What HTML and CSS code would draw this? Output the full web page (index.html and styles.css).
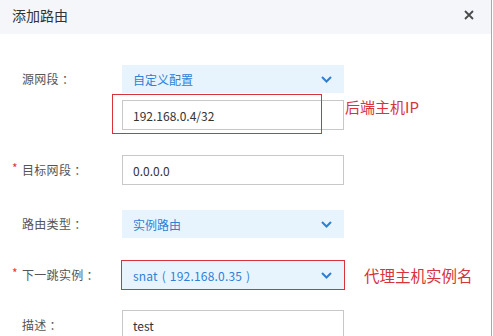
FILE: index.html
```html
<!DOCTYPE html>
<html lang="zh-CN">
<head>
<meta charset="utf-8">
<title>添加路由</title>
<link rel="stylesheet" href="styles.css">
</head>
<body>
<div class="dialog">
  <div class="dialog-header">
    <span class="dialog-title">添加路由</span>
    <svg class="close" width="10" height="10" viewBox="0 0 10 10"><path d="M1 1L9 9M9 1L1 9" stroke="#4a4a4a" stroke-width="1.8" fill="none"/></svg>
  </div>
  <div class="dialog-body">
    <div class="row row-src">
      <div class="label">源网段<span class="colon">：</span></div>
      <div class="controls">
        <div class="select">
          <span>自定义配置</span>
          <svg class="chev" width="11" height="7" viewBox="0 0 11 7"><path d="M1 1L5.5 5.5L10 1" stroke="#2f7fd0" stroke-width="2" fill="none"/></svg>
        </div>
        <div class="annotated">
          <div class="input input-gap">192.168.0.4/32</div>
          <span class="redbox redbox-ip"></span>
          <span class="note note-ip">后端主机IP</span>
        </div>
      </div>
    </div>
    <div class="row row-dst">
      <div class="label"><span class="req">*</span>目标网段<span class="colon">：</span></div>
      <div class="controls"><div class="input">0.0.0.0</div></div>
    </div>
    <div class="row row-type">
      <div class="label">路由类型<span class="colon">：</span></div>
      <div class="controls">
        <div class="select">
          <span>实例路由</span>
          <svg class="chev" width="11" height="7" viewBox="0 0 11 7"><path d="M1 1L5.5 5.5L10 1" stroke="#2f7fd0" stroke-width="2" fill="none"/></svg>
        </div>
      </div>
    </div>
    <div class="row row-next">
      <div class="label"><span class="req">*</span>下一跳实例<span class="colon">：</span></div>
      <div class="controls annotated">
        <div class="select select-flagged">
          <span class="wide">snat ( 192.168.0.35 )</span>
          <svg class="chev" width="11" height="7" viewBox="0 0 11 7"><path d="M1 1L5.5 5.5L10 1" stroke="#2f7fd0" stroke-width="2" fill="none"/></svg>
        </div>
        <span class="note note-inst">代理主机实例名</span>
      </div>
    </div>
    <div class="row row-desc">
      <div class="label">描述<span class="colon">：</span></div>
      <div class="controls"><div class="input">test</div></div>
    </div>
  </div>
</div>
</body>
</html>
```

FILE: styles.css
```css
* { box-sizing: border-box; }
html, body { margin: 0; padding: 0; background: #fff; }
body {
  font-family: "Noto Sans CJK SC", "Noto Sans", sans-serif;
  font-size: 12px;
  color: #333;
  overflow: hidden;
  height: 336px;
}
.dialog {
  width: 492px;
  height: 336px;
  border-right: 1px solid #a8a8a8;
  background: #fff;
}
.dialog-header {
  height: 34px;
  background: #f4f6f9;
  display: flex;
  align-items: center;
  justify-content: space-between;
  padding: 0 17px 0 12px;
}
.dialog-title {
  font-size: 14px;
  color: #333;
  line-height: 1;
  margin-top: -4px;
}
.close { margin-top: -5px; }
.dialog-body { padding-top: 31px; }
.row {
  display: flex;
  align-items: flex-start;
}
.label {
  width: 122px;
  padding-left: 22px;
  position: relative;
  color: #555;
  font-size: 12px;
  line-height: 28px;
  letter-spacing: 0.3px;
}
.colon { margin-left: 3px; }
.req {
  position: absolute;
  left: 12px;
  top: -2px;
  color: #e0393e;
  font-size: 12px;
}
.controls {
  width: 222px;
  display: flex;
  flex-direction: column;
}
.select {
  height: 28px;
  background: #e8f4fd;
  color: #2f80d6;
  display: flex;
  align-items: center;
  justify-content: space-between;
  padding: 0 12px 0 11px;
  font-size: 12px;
}
.wide { word-spacing: 1px; letter-spacing: 0.2px; }
.chev { margin-top: 1px; }
.input {
  height: 30px;
  border: 1px solid #c8c8c8;
  padding: 0 10px;
  display: flex;
  align-items: center;
  font-size: 12px;
  color: #333;
}
.input-gap { margin-top: 7px; }
.row-src { position: relative; }
.annotated { position: relative; }
.row-src .annotated { position: static; }
.redbox {
  position: absolute;
  border: 1px solid #d8323a;
}
.row-src .redbox-ip { left: 112px; top: 29px; width: 210px; height: 40px; }
.note {
  position: absolute;
  color: #d8323a;
  font-size: 15px;
  line-height: 1;
  white-space: nowrap;
}
.row-src .note-ip { left: 345px; top: 34px; }
.select-flagged { outline: 1px solid #d8323a; outline-offset: 0; }
.note-inst { left: 242px; top: 7px; font-size: 15.5px; }
.row-dst { margin-top: 25px; }
.row-dst .label { line-height: 30px; }
.row-type { margin-top: 25px; }
.row-next { margin-top: 23px; }
.row-desc { margin-top: 21px; }
.row-desc .label { line-height: 30px; }
```
